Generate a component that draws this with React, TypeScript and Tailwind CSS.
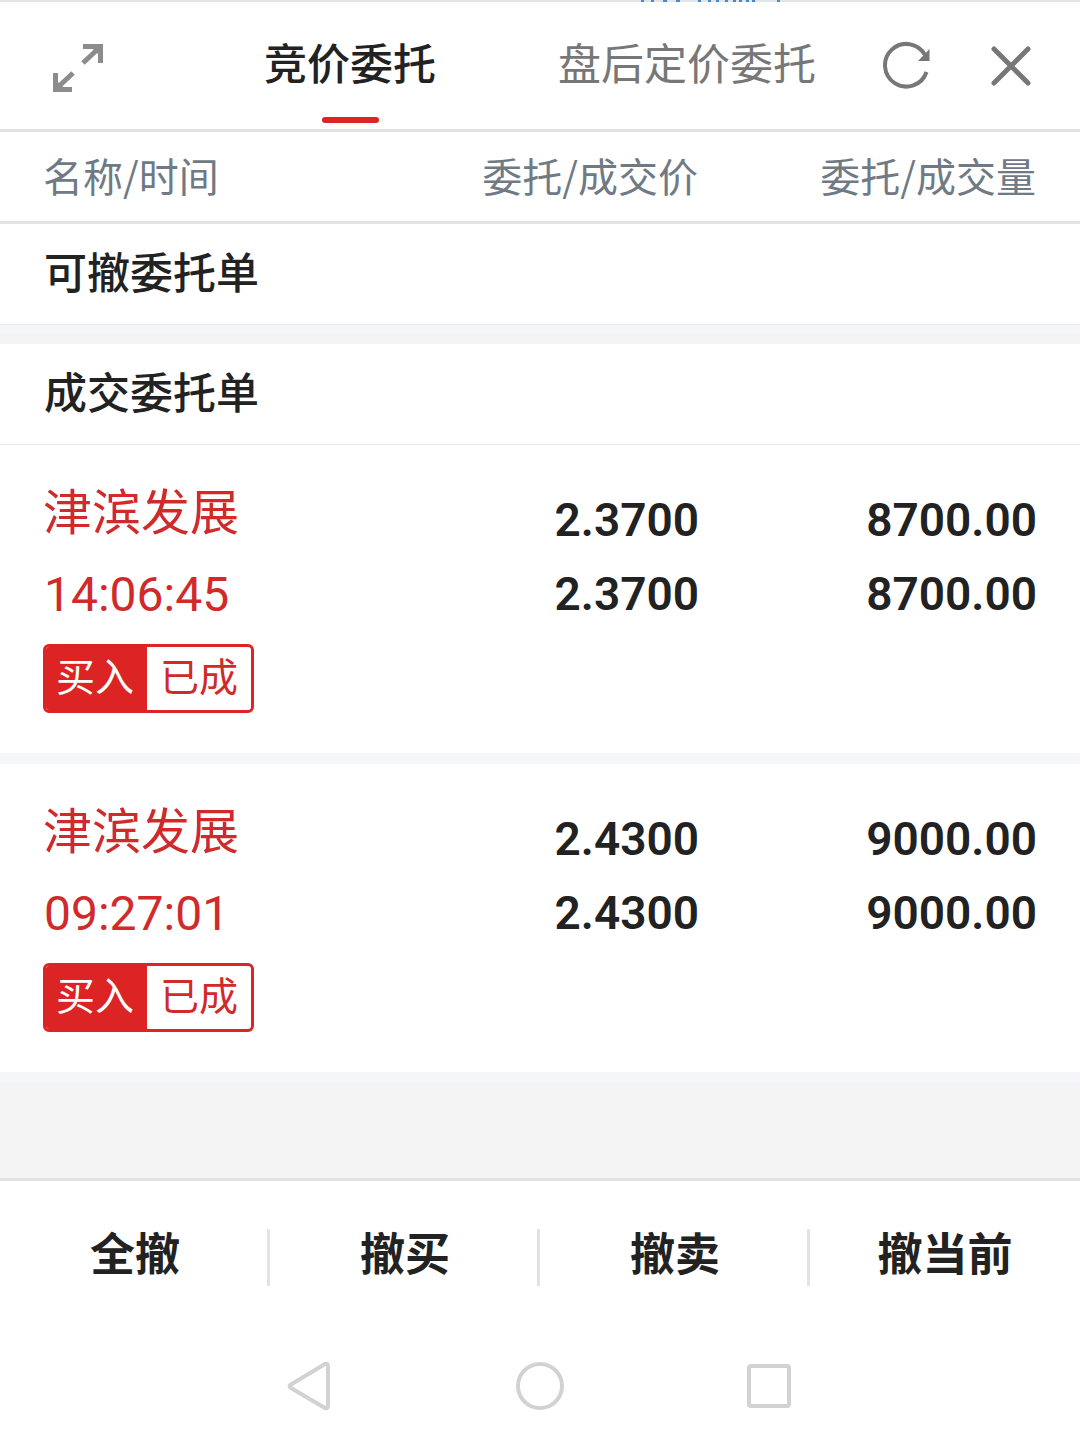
import React from "react";

type Order = {
  name: string;
  time: string;
  side: string;
  status: string;
  price: string;
  dealPrice: string;
  amount: string;
  dealAmount: string;
};

const orders: Order[] = [
  { name: "津滨发展", time: "14:06:45", side: "买入", status: "已成", price: "2.3700", dealPrice: "2.3700", amount: "8700.00", dealAmount: "8700.00" },
  { name: "津滨发展", time: "09:27:01", side: "买入", status: "已成", price: "2.4300", dealPrice: "2.4300", amount: "9000.00", dealAmount: "9000.00" },
];

const actions = ["全撤", "撤买", "撤卖", "撤当前"];

function PageEdge() {
  return (
    <div className="flex h-[2px] justify-center bg-[#e2e5e7]">
      <svg className="ml-[340px] h-[2px] w-[144px]" viewBox="0 0 144 2" fill="#4a88c8" aria-hidden="true">
        <path d="M3 0h3v2H3zM13 0h3v2h-3zM25 0h4v2h-4zM38 0h4v2h-4zM60 0h3v2h-3zM70 0h3v2h-3zM78 0h3v2h-3zM87 0h3v2h-3zM95 0h3v2h-3zM101 0h3v2h-3zM108 0h3v2h-3zM114 0h3v2h-3zM139 0h3v2h-3z" />
      </svg>
    </div>
  );
}

function Header() {
  return (
    <header className="flex h-[130px] items-start border-b-[3px] border-[#e3e3e3] pr-12 pl-[52px]">
      <button aria-label="展开" className="mt-[41px]">
        <svg width="52" height="50" viewBox="0 0 52 50" fill="none" stroke="#8c8c8c" strokeWidth="5">
          <path d="M31 3.500h17.500V20M48 4L31 20M3.500 30v16.500H20M4 46l17-16" />
          <path d="M39 4h9v9zM4 37v9h9z" fill="#8c8c8c" stroke="none" />
        </svg>
      </button>
      <nav className="ml-auto flex gap-[122px] text-[43px] leading-[60px]">
        <button className="mt-[29px] flex flex-col items-center font-medium text-[#222]">
          竞价委托
          <span className="mt-[26px] h-[6px] w-[57px] rounded-full bg-[#dc2424]" />
        </button>
        <button className="mt-[29px] self-start text-[#777]">盘后定价委托</button>
      </nav>
      <button aria-label="刷新" className="mt-[39px] ml-[67px]">
        <svg width="50" height="50" viewBox="0 0 50 50" fill="none">
          <path d="M43.500 31A21.300 21.300 0 1 1 42 14" stroke="#777" strokeWidth="4" />
          <path d="M46.500 8v12H35z" fill="#777" />
        </svg>
      </button>
      <button aria-label="关闭" className="mt-[43px] ml-[57px]">
        <svg width="42" height="42" viewBox="0 0 42 42" stroke="#777" strokeWidth="5" strokeLinecap="round">
          <path d="M4 4l34 34M38 4L4 38" />
        </svg>
      </button>
    </header>
  );
}

function SectionTitle({ children }: { children: React.ReactNode }) {
  return (
    <tr>
      <th colSpan={3} scope="colgroup" className="h-[101px] border-b border-[#e8e9eb] pr-11 pb-2 pl-11 text-left text-[43px] leading-[60px] font-medium">
        {children}
      </th>
    </tr>
  );
}

function OrderRow({ order }: { order: Order }) {
  return (
    <tr className="align-top">
      <td className="border-b-[11px] border-[#f4f6fa] pt-[30px] pb-10 pl-[43px]">
        <div className="text-[49px] leading-[68px] text-[#d02a2a]">{order.name}</div>
        <div className="mt-[18px] pl-px font-['Roboto','Noto_Sans_CJK_SC',sans-serif] text-[48px] leading-[68px] text-[#d02a2a]">{order.time}</div>
        <div className="mt-[15px] flex h-[69px] w-fit overflow-hidden rounded-md border-[3px] border-[#dc2424] bg-white text-[39px] leading-[54px]">
          <span className="w-[101px] bg-[#dc2424] pr-[3px] text-center text-white">{order.side}</span>
          <span className="w-[104px] text-center text-[#d02a2a]">{order.status}</span>
        </div>
      </td>
      <td className="border-b-[11px] border-[#f4f6fa] pt-[38px] pr-[3px] text-right font-['Roboto','Noto_Sans_CJK_SC',sans-serif] text-[46px] leading-[74px] font-semibold">
        <div>{order.price}</div>
        <div>{order.dealPrice}</div>
      </td>
      <td className="border-b-[11px] border-[#f4f6fa] pt-[38px] pr-[43px] text-right font-['Roboto','Noto_Sans_CJK_SC',sans-serif] text-[46px] leading-[74px] font-semibold">
        <div>{order.amount}</div>
        <div>{order.dealAmount}</div>
      </td>
    </tr>
  );
}

export default function App() {
  return (
    <div className="flex min-h-screen flex-col bg-white font-['Noto_Sans_CJK_SC',sans-serif] text-[#222]">
      <PageEdge />
      <Header />
      <main className="flex grow flex-col bg-[#f4f4f4]">
        <table className="w-full table-fixed border-separate border-spacing-0 bg-white">
          <colgroup>
            <col className="w-[35%]" />
            <col className="w-[30%]" />
            <col className="w-[35%]" />
          </colgroup>
          <thead>
            <tr className="h-[92px] text-[40px] leading-[56px] text-[#6f7a85]">
              <th scope="col" className="border-b-[3px] border-[#e3e3e3] pb-1 pl-[43px] text-left font-normal">名称/时间</th>
              <th scope="col" className="border-b-[3px] border-[#e3e3e3] pr-1 pb-1 text-right font-normal">委托/成交价</th>
              <th scope="col" className="border-b-[3px] border-[#e3e3e3] pr-11 pb-1 text-right font-normal">委托/成交量</th>
            </tr>
          </thead>
          <tbody>
            <SectionTitle>可撤委托单</SectionTitle>
            <tr aria-hidden="true">
              <td colSpan={3} className="h-[19px] border-t-8 border-[#f4f6fa] bg-[#f4f4f4] p-0" />
            </tr>
          </tbody>
          <tbody>
            <SectionTitle>成交委托单</SectionTitle>
            {orders.map((order) => (
              <OrderRow key={order.time} order={order} />
            ))}
          </tbody>
        </table>
      </main>
      <footer className="border-t-[3px] border-[#e3e3e3] bg-white">
        <div className="grid grid-cols-4 py-12">
          {actions.map((label) => (
            <button key={label} className="h-[57px] border-r-[3px] border-[#e3e3e3] pb-3 pl-[3px] text-[45px] leading-[45px] font-bold last:border-r-0 last:pl-0">
              {label}
            </button>
          ))}
        </div>
        <nav aria-label="系统导航" className="flex h-[110px] items-start justify-center gap-[182px] pt-[27px]">
          <button aria-label="返回">
            <svg width="46" height="50" viewBox="0 0 46 50" fill="none" stroke="#d2d2d2" strokeWidth="4" strokeLinejoin="round">
              <path d="M4 23.500L38 3Q41 2 41 5V45Q41 48 38 47L4 27Q1 25 4 23.500z" />
            </svg>
          </button>
          <button aria-label="主页">
            <svg width="50" height="50" viewBox="0 0 50 50" fill="none" stroke="#d2d2d2" strokeWidth="4">
              <circle cx="25" cy="25" r="22" />
            </svg>
          </button>
          <button aria-label="最近任务">
            <svg width="46" height="50" viewBox="0 0 46 50" fill="none" stroke="#d2d2d2" strokeWidth="4">
              <rect x="2" y="5" width="40" height="40" rx="2" />
            </svg>
          </button>
        </nav>
      </footer>
    </div>
  );
}
